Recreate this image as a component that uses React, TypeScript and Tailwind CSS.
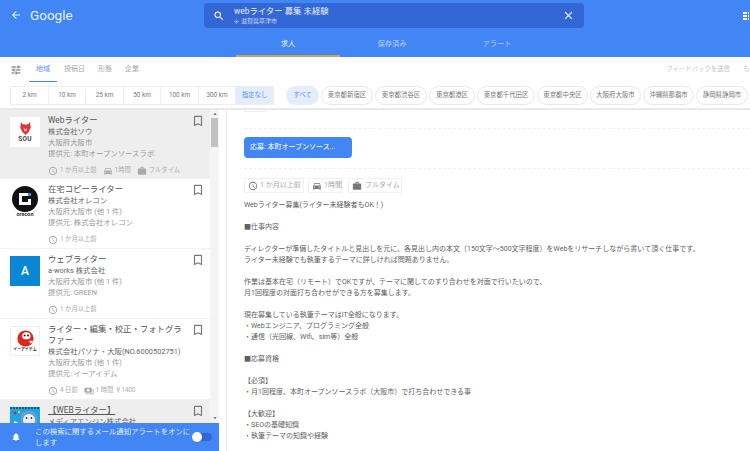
import React from 'react';
import {
    MdAccessTime,
    MdArrowBack,
    MdArrowDropDown,
    MdArrowDropUp,
    MdBookmarkBorder,
    MdClose,
    MdDirectionsCar,
    MdMyLocation,
    MdNotifications,
    MdPayments,
    MdSearch,
    MdTune,
    MdWork,
} from 'react-icons/md';

const font = { fontFamily: 'Roboto, "Noto Sans CJK JP", sans-serif' };

const distances = [
    { label: '2 km', w: 'w-[38px]' },
    { label: '10 km', w: 'w-[37px]' },
    { label: '25 km', w: 'w-[38px]' },
    { label: '50 km', w: 'w-[37px]' },
    { label: '100 km', w: 'w-[38px]' },
    { label: '300 km', w: 'w-[37px]' },
];

const places = [
    { label: '東京都新宿区', w: 'w-[52px]' },
    { label: '東京都渋谷区', w: 'w-[52px]' },
    { label: '東京都港区', w: 'w-[46px]' },
    { label: '東京都千代田区', w: 'w-[58px]' },
    { label: '東京都中央区', w: 'w-[51px]' },
    { label: '大阪府大阪市', w: 'w-[51px]' },
    { label: '沖縄県那覇市', w: 'w-[51px]' },
    { label: '静岡県静岡市', w: 'w-[52px]' },
];

const SouLogo = () => (
    <div className="w-[30px] h-[30px] bg-white flex flex-col items-center justify-center shrink-0">
        <svg viewBox="0 0 20 20" className="w-[13px] h-[13px]">
            <path d="M3 0l3 4 2-1 2 2 2-2 2 1 3-4 1 9-3 6-5 5-5-5-3-6z" fill="#d9363e" />
            <path d="M7 9l3 2 3-2-1 4-2 2-2-2z" fill="#f3b4b4" />
        </svg>
        <span className="text-[6.5px] leading-[8px] font-bold text-[#444] tracking-[0.2px]">SOU</span>
    </div>
);

const OreconLogo = () => (
    <div className="w-[30px] h-[30px] bg-white flex flex-col items-center shrink-0">
        <svg viewBox="0 0 26 26" className="w-[26px] h-[26px]">
            <circle cx="13" cy="13" r="13" fill="#111" />
            <path d="M7 7h9v3h-6v6h6v-3h3v6H7z" fill="#fff" />
            <rect x="16" y="7" width="3" height="3" fill="#2f8fe0" />
        </svg>
        <span className="text-[5.5px] leading-[4px] font-bold text-[#333]">orecon</span>
    </div>
);

const ALogo = () => (
    <div className="w-[30px] h-[30px] bg-[#0a86d4] flex items-center justify-center shrink-0">
        <span className="text-[12px] text-white font-medium">A</span>
    </div>
);

const ItemLogo = () => (
    <div className="w-[30px] h-[30px] bg-white border border-[#eee] flex flex-col items-center justify-center shrink-0">
        <svg viewBox="0 0 20 20" className="w-[17px] h-[17px]">
            <circle cx="10" cy="10" r="9.5" fill="#e2231a" />
            <path d="M6 7a5 4.5 0 0 1 10 0c0 3-2 4-5 4s-5-1-5-4z" fill="#fff" />
            <circle cx="9" cy="6.5" r="1.2" fill="#222" />
            <circle cx="13" cy="6.5" r="1.2" fill="#222" />
            <path d="M14 12.5l6 .5-4 3z" fill="#fff" />
        </svg>
        <span className="text-[4px] leading-[5px] font-bold text-[#333]">イーアイデム</span>
    </div>
);

const MascotLogo = () => (
    <div className="w-[30px] h-[30px] bg-[#1fa5e3] flex items-center justify-center shrink-0">
        <svg viewBox="0 0 30 30" className="w-[30px] h-[30px]">
            <path d="M0 1h30" stroke="#0b5f9e" strokeWidth="2" strokeDasharray="2 1" />
            <path d="M11 30V10c0-4 3-6 8-6s8 3 8 7v19z" fill="#6f9fc4" />
            <circle cx="19" cy="13" r="6" fill="#e8eef4" />
            <circle cx="16.5" cy="11" r="1.8" fill="#fff" />
            <circle cx="21.5" cy="11" r="1.8" fill="#fff" />
            <circle cx="16.5" cy="11" r="0.9" fill="#223" />
            <circle cx="21.5" cy="11" r="0.9" fill="#223" />
            <path d="M4 14l7 3-1 6-6-3z" fill="#fff" />
            <circle cx="5" cy="6" r="1.4" fill="#e2231a" />
            <circle cx="9" cy="5" r="1.2" fill="#f0c040" />
        </svg>
    </div>
);

const Meta = ({ icon, text }: { icon: React.ReactNode; text: string }) => (
    <span className="flex items-center gap-[2px]">
        {icon}
        <span>{text}</span>
    </span>
);

const jobs = [
    {
        title: 'Webライター',
        company: '株式会社ソウ',
        place: '大阪府大阪市',
        via: '提供元: 本町オープンソースラボ',
        logo: <SouLogo />,
        h: 'h-[69px]',
        selected: true,
        metas: [
            { icon: <MdAccessTime className="w-[10px] h-[10px]" />, text: '1 か月以上前' },
            { icon: <MdDirectionsCar className="w-[10px] h-[10px]" />, text: '1時間' },
            { icon: <MdWork className="w-[10px] h-[10px]" />, text: 'フルタイム' },
        ],
    },
    {
        title: '在宅コピーライター',
        company: '株式会社オレコン',
        place: '大阪府大阪市 (他 1 件)',
        via: '提供元: 株式会社オレコン',
        logo: <OreconLogo />,
        h: 'h-[70px]',
        metas: [{ icon: <MdAccessTime className="w-[10px] h-[10px]" />, text: '1 か月以上前' }],
    },
    {
        title: 'ウェブライター',
        company: 'a-works 株式会社',
        place: '大阪府大阪市 (他 1 件)',
        via: '提供元: GREEN',
        logo: <ALogo />,
        h: 'h-[70px]',
        metas: [{ icon: <MdAccessTime className="w-[10px] h-[10px]" />, text: '1 か月以上前' }],
    },
    {
        title: 'ライター・編集・校正・フォトグラファー',
        company: '株式会社パソナ・大阪(NO.6000502751)',
        place: '大阪府大阪市 (他 1 件)',
        via: '提供元: イーアイデム',
        logo: <ItemLogo />,
        h: 'h-[81px]',
        metas: [
            { icon: <MdAccessTime className="w-[10px] h-[10px]" />, text: '4 日前' },
            { icon: <MdPayments className="w-[10px] h-[10px]" />, text: '1 時間 ￥1400' },
        ],
    },
    {
        title: '【WEBライター】',
        company: 'メディアエンジン株式会社',
        place: '',
        via: '',
        logo: <MascotLogo />,
        h: 'h-[70px]',
        active: true,
        metas: [],
    },
];

const body = [
    'Webライター募集(ライター未経験者もOK！)',
    '',
    '■仕事内容',
    '',
    'ディレクターが準備したタイトルと見出しを元に、各見出し内の本文（150文字～500文字程度）をWebをリサーチしながら書いて頂く仕事です。',
    'ライター未経験でも執筆するテーマに詳しければ問題ありません。',
    '',
    '作業は基本在宅（リモート）でOKですが、テーマに関してのすり合わせを対面で行いたいので、',
    '月1回程度の対面打ち合わせができる方を募集します。',
    '',
    '現在募集している執筆テーマはIT全般になります。',
    '・Webエンジニア、プログラミング全般',
    '・通信（光回線、Wifi、sim等）全般',
    '',
    '■応募資格',
    '',
    '【必須】',
    '・月1回程度、本町オープンソースラボ（大阪市）で打ち合わせできる事',
    '',
    '【大歓迎】',
    '・SEOの基礎知識',
    '・執筆テーマの知識や経験',
];

export default function App() {
    return (
        <div className="w-[750px] h-[451px] overflow-hidden bg-white flex flex-col" style={font}>
            {/* Header */}
            <header className="h-[57px] bg-[#4285f4] text-white flex flex-col shrink-0">
                <div className="flex items-start h-[32px] pt-[3px]">
                    <MdArrowBack className="w-[12px] h-[12px] ml-[10px] mt-[6px] opacity-90" />
                    <span className="text-[13.5px] leading-[25px] ml-[8px] w-[174px] font-normal opacity-90">Google</span>
                    <div className="w-[380px] h-[25px] bg-[#3367d6] rounded-[4px] flex items-center pl-[9px] pr-[9px]">
                        <MdSearch className="w-[12px] h-[12px]" />
                        <div className="ml-[9px] flex-1">
                            <div className="text-[8.4px] leading-[11px] opacity-90">webライター 募集 未経験</div>
                            <div className="text-[6px] leading-[8px] flex items-center gap-[2px] opacity-70">
                                <MdMyLocation className="w-[5px] h-[5px]" />
                                滋賀県草津市
                            </div>
                        </div>
                        <MdClose className="w-[13px] h-[13px]" />
                    </div>
                    <div className="ml-auto mr-[1px] mt-[9px] grid grid-cols-3 gap-[1px] w-[6px]">
                        {[0, 1, 2, 3, 4, 5, 6, 7, 8].map(i => (
                            <span key={i} className="w-[1.5px] h-[2px] bg-white" />
                        ))}
                    </div>
                </div>
                <nav className="flex ml-[236px] h-[25px] text-[7.3px]">
                    <div className="w-[104px] flex items-center justify-center border-b-2 border-[#d6a24e] pt-[1px] opacity-95">求人</div>
                    <div className="w-[104px] flex items-center justify-center opacity-60">保存済み</div>
                    <div className="w-[104px] flex items-center justify-center opacity-60 pl-[2px]">アラート</div>
                </nav>
            </header>

            {/* Filters */}
            <section className="h-[53px] shrink-0 border-b-2 border-[#e9e9e9] flex flex-col">
                <div className="flex items-center h-[25px] text-[7px] text-[#a8a8a8]">
                    <MdTune className="w-[12px] h-[12px] ml-[10px] text-[#666]" />
                    <div className="ml-[7px] w-[28px] h-[25px] flex items-center justify-center text-[#5a93f0] border-b border-[#4285f4] pt-[1px]">地域</div>
                    <span className="ml-[7px]">投稿日</span>
                    <span className="ml-[13px]">形態</span>
                    <span className="ml-[13px]">企業</span>
                    <span className="ml-auto text-[6.4px] text-[#c4c4c4]">フィードバックを送信</span>
                    <span className="ml-[13px] w-[7px] text-[6.4px] text-[#c4c4c4]">も</span>
                </div>
                <div className="flex items-start mt-[4px] text-[6.4px] text-[#777] pl-[10px] whitespace-nowrap">
                    <div className="flex h-[19px] border border-[#eee]">
                        {distances.map(d => (
                            <div key={d.label} className={`${d.w} flex items-center justify-center border-r border-[#eee]`}>
                                {d.label}
                            </div>
                        ))}
                        <div className="w-[37px] flex items-center justify-center bg-[#e3edfc] text-[#5a93f0]">指定なし</div>
                    </div>
                    <div className="ml-[12px] w-[33px] h-[19px] rounded-full bg-[#e3edfc] text-[#5a93f0] flex items-center justify-center shrink-0">すべて</div>
                    <div className="flex gap-[2px] ml-[2px]">
                        {places.map(p => (
                            <div key={p.label} className={`${p.w} h-[19px] rounded-full border border-[#e8e8e8] flex items-center justify-center shrink-0`}>
                                {p.label}
                            </div>
                        ))}
                    </div>
                </div>
            </section>

            {/* Main */}
            <main className="flex-1 flex min-h-0">
                <aside className="w-[219px] shrink-0 flex relative bg-[#fafafa]">
                    <div className="w-[210px] shrink-0 flex flex-col overflow-hidden bg-white">
                        {jobs.map(job => (
                            <div
                                key={job.title}
                                className={`${job.h} shrink-0 flex pl-[10px] pr-[5px] pt-[7px] border-b border-[#f2f2f2] ${job.selected || job.active ? 'bg-[#eeeeee]' : ''}`}
                            >
                                {job.logo}
                                <div className="ml-[8px] mr-[7px] -mt-[2px] flex-1 min-w-0 text-[7.4px] leading-[11px] text-[#999]">
                                    <div className={`text-[8.4px] leading-[11px] text-[#555] ${job.active ? 'underline' : ''}`}>{job.title}</div>
                                    <div className="text-[#666] whitespace-nowrap">{job.company}</div>
                                    <div>{job.place}</div>
                                    <div>{job.via}</div>
                                    <div className="flex items-center gap-[6px] mt-[6px] text-[6.3px] text-[#aaa] whitespace-nowrap">
                                        {job.metas.map(m => (
                                            <Meta key={m.text} icon={m.icon} text={m.text} />
                                        ))}
                                    </div>
                                </div>
                                <MdBookmarkBorder className="w-[14px] h-[14px] -mt-[3px] text-[#777] shrink-0" />
                            </div>
                        ))}
                    </div>
                    {/* Scrollbar */}
                    <div className="flex-1 flex flex-col items-center bg-[#f4f4f4] text-[#555]">
                        <MdArrowDropUp className="w-[8px] h-[8px]" />
                        <div className="w-[7px] h-[29px] bg-[#c1c1c1]" />
                        <MdArrowDropDown className="w-[8px] h-[8px] mt-[267px]" />
                    </div>
                    {/* Alert banner */}
                    <div className="absolute left-0 right-0 bottom-0 h-[28px] bg-[#4285f4] text-white flex items-center pl-[11px]">
                        <MdNotifications className="w-[10px] h-[10px] shrink-0" />
                        <span className="ml-[14px] w-[157px] text-[7.4px] leading-[11px] opacity-85">この検索に関するメール通知アラートをオンにします</span>
                        <div className="relative w-[20px] h-[8px] rounded-full bg-[#3367d6]">
                            <div className="absolute left-0 top-[-1px] w-[10px] h-[10px] rounded-full bg-white" />
                        </div>
                    </div>
                </aside>

                <div className="w-[7px] shrink-0 bg-white" />

                <article className="flex-1 min-w-0 border-l border-[#eee] pl-[17px] overflow-hidden">
                    <div className="h-[19px] border-b border-[#f0f0f0] border-dashed">
                        <div className="w-[22px] h-[2px] border-x border-b border-[#eee]" />
                    </div>
                    <div className="h-[40px] border-b border-[#f0f0f0] border-dashed pt-[8px]">
                        <div className="w-[108px] h-[21px] rounded-[4px] bg-[#4285f4] text-white text-[7px] flex items-center pl-[6px]">応募: 本町オープンソース...</div>
                    </div>
                    <div className="flex gap-[4px] mt-[9px] text-[7px] text-[#a8a8a8] whitespace-nowrap">
                        <div className="w-[60px] h-[15px] pl-[3px] border border-[#f0f0f0] flex items-center gap-[2px]">
                            <MdAccessTime className="w-[10px] h-[10px] text-[#777] shrink-0" />1 か月以上前
                        </div>
                        <div className="w-[34px] h-[15px] pl-[3px] border border-[#f0f0f0] flex items-center gap-[2px]">
                            <MdDirectionsCar className="w-[10px] h-[10px] text-[#777] shrink-0" />1時間
                        </div>
                        <div className="w-[54px] ml-[2px] h-[15px] pl-[3px] border border-[#f0f0f0] flex items-center gap-[3px]">
                            <MdWork className="w-[10px] h-[10px] text-[#777] shrink-0" />フルタイム
                        </div>
                    </div>
                    <div className="mt-[7px] text-[7px] leading-[11px] text-[#616161] whitespace-nowrap">
                        {body.map((line, i) => (
                            <div key={i} className="h-[11px]">{line}</div>
                        ))}
                    </div>
                </article>
            </main>
        </div>
    );
}
